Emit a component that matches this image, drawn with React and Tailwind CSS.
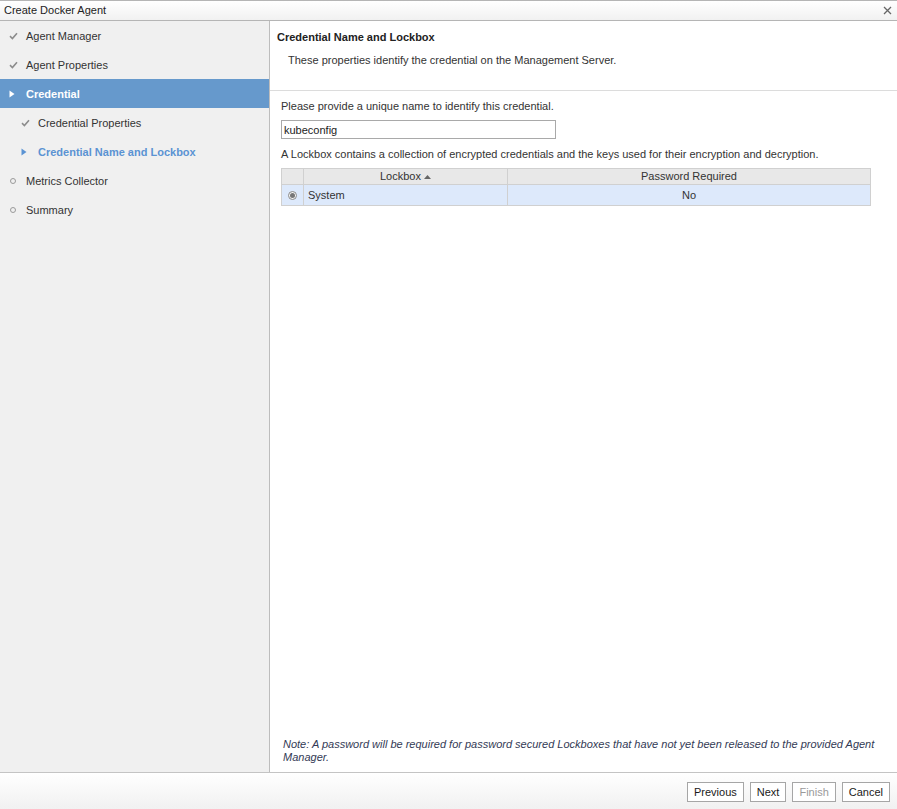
import React, { useState } from 'react';

const steps = [
  { label: 'Agent Manager', state: 'done', level: 0 },
  { label: 'Agent Properties', state: 'done', level: 0 },
  { label: 'Credential', state: 'selected', level: 0 },
  { label: 'Credential Properties', state: 'done', level: 1 },
  { label: 'Credential Name and Lockbox', state: 'current', level: 1 },
  { label: 'Metrics Collector', state: 'todo', level: 0 },
  { label: 'Summary', state: 'todo', level: 0 },
];

function StepIcon({ state }) {
  if (state === 'done') {
    return (
      <svg width="9" height="8" viewBox="0 0 9 8">
        <path d="M1 4.2 L3.4 6.5 L8 1.3" fill="none" stroke="#8c8c8c" strokeWidth="1.6" />
      </svg>
    );
  }
  if (state === 'selected' || state === 'current') {
    return (
      <svg width="6" height="8" viewBox="0 0 6 8">
        <path d="M0.5 0.5 L5.5 4 L0.5 7.5 Z" fill={state === 'selected' ? '#ffffff' : '#5b93d3'} />
      </svg>
    );
  }
  return <span className="block ml-[1px] w-[6px] h-[6px] border border-[#9a9a9a] rounded-full" />;
}

function Button({ children, disabled }) {
  return (
    <button
      className={`h-[20px] px-[6px] border border-[#a6a6a6] bg-white text-[11px] leading-none ${
        disabled ? 'text-[#9a9a9a]' : 'text-[#1a1a1a]'
      }`}
    >
      {children}
    </button>
  );
}

export default function App() {
  const [name, setName] = useState('kubeconfig');

  return (
    <div className="w-[897px] h-[809px] flex flex-col bg-white text-[#333] text-[11px] leading-[13px] font-['Liberation_Sans',Arial,sans-serif] overflow-hidden">
      {/* Title bar */}
      <div className="h-[21px] shrink-0 flex items-center justify-between pl-[4px] pr-[4px] border-t border-b border-[#b5b5b5] bg-gradient-to-b from-white to-[#f1f1f1]">
        <span className="text-[11px] text-[#222]">Create Docker Agent</span>
        <svg width="9" height="9" viewBox="0 0 9 9" className="mr-[1px]">
          <path d="M1 1 L8 8 M8 1 L1 8" stroke="#666" strokeWidth="1.3" />
        </svg>
      </div>

      <div className="flex flex-1 min-h-0">
        {/* Left: steps */}
        <div className="w-[270px] shrink-0 bg-[#f0f0f0] border-r border-[#bdbdbd]">
          {steps.map((s) => (
            <div
              key={s.label}
              className={`h-[29px] flex items-center pt-[1px] ${s.level ? 'pl-[21px]' : 'pl-[9px]'} ${
                s.state === 'selected' ? 'bg-[#6699cc]' : ''
              }`}
            >
              <span className="w-[17px] flex items-center">
                <StepIcon state={s.state} />
              </span>
              <span
                className={
                  s.state === 'selected'
                    ? 'text-white font-bold'
                    : s.state === 'current'
                    ? 'text-[#5b93d3] font-bold'
                    : 'text-[#333]'
                }
              >
                {s.label}
              </span>
            </div>
          ))}
        </div>

        {/* Right: content */}
        <div className="flex-1 flex flex-col min-w-0">
          <div className="h-[70px] shrink-0 border-b border-[#dcdcdc] pl-[7px] pt-[10px]">
            <div className="font-bold text-[#222]">Credential Name and Lockbox</div>
            <div className="mt-[10px] pl-[11px] text-[#333]">
              These properties identify the credential on the Management Server.
            </div>
          </div>

          <div className="flex-1 flex flex-col pl-[11px] pr-[26px] pt-[9px]">
            <div>Please provide a unique name to identify this credential.</div>
            <input
              value={name}
              onChange={(e) => setName(e.target.value)}
              className="mt-[7px] w-[275px] h-[19px] border border-[#a9a9a9] px-[2px] text-[11px] text-[#222] outline-none"
            />
            <div className="mt-[9px]">
              A Lockbox contains a collection of encrypted credentials and the keys used for their encryption and decryption.
            </div>

            <div className="mt-[7px] border border-[#d0d0d0]">
              <div className="flex h-[16px] bg-[#e8e8e8] border-b border-[#d0d0d0]">
                <div className="w-[22px] border-r border-[#d0d0d0]" />
                <div className="w-[204px] border-r border-[#d0d0d0] flex items-center justify-center gap-[3px]">
                  Lockbox
                  <svg width="7" height="4" viewBox="0 0 7 4">
                    <path d="M0 4 L3.5 0 L7 4 Z" fill="#666" />
                  </svg>
                </div>
                <div className="flex-1 flex items-center justify-center">Password Required</div>
              </div>
              <div className="flex h-[20px] bg-[#dde9fb]">
                <div className="w-[22px] border-r border-[#d0d0d0] flex items-center justify-center">
                  <span className="w-[9px] h-[9px] rounded-full border border-[#8a8a8a] bg-[#f4f4f4] flex items-center justify-center">
                    <span className="w-[5px] h-[5px] rounded-full bg-[#777]" />
                  </span>
                </div>
                <div className="w-[204px] border-r border-[#d0d0d0] flex items-center pl-[4px]">System</div>
                <div className="flex-1 flex items-center justify-center">No</div>
              </div>
            </div>

            <div className="mt-auto mb-[8px] pl-[2px] -mr-[8px] italic text-[#333a55]">
              Note: A password will be required for password secured Lockboxes that have not yet been released to the provided Agent Manager.
            </div>
          </div>
        </div>
      </div>

      {/* Footer */}
      <div className="h-[37px] shrink-0 border-t border-[#c4c4c4] bg-gradient-to-b from-white to-[#f1f1f1] flex items-center justify-end gap-[6px] pr-[7px] pt-[2px]">
        <Button>Previous</Button>
        <Button>Next</Button>
        <Button disabled>Finish</Button>
        <Button>Cancel</Button>
      </div>
    </div>
  );
}
